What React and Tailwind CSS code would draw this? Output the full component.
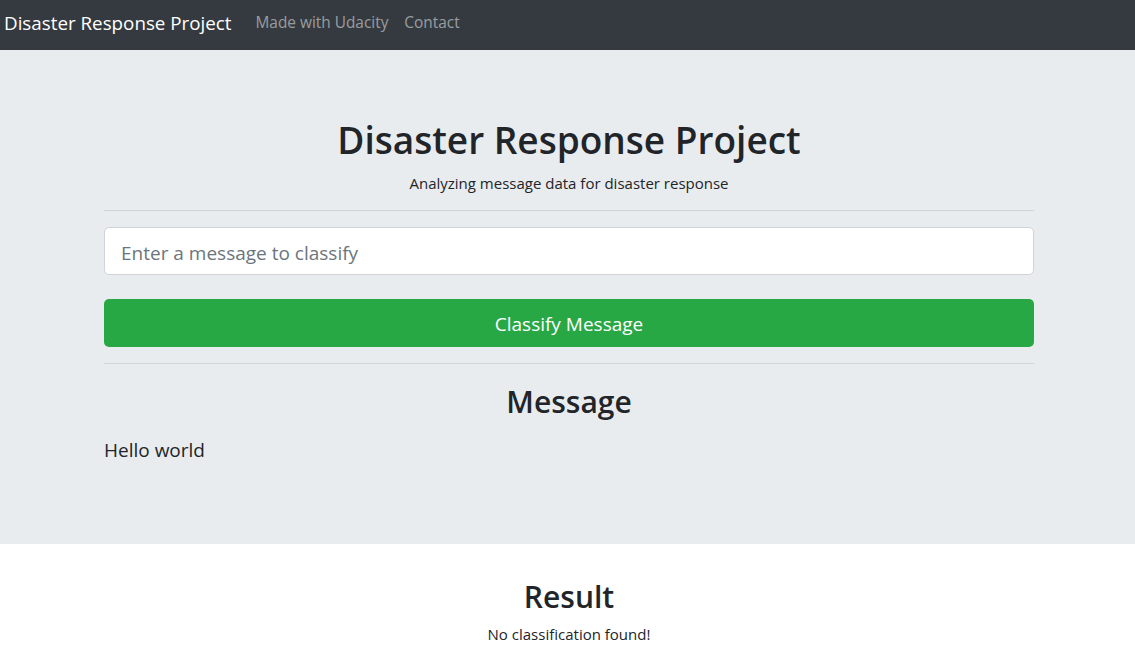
import React from 'react';

const App = () => {
  return (
    <div className="min-h-screen bg-white text-[#212529] font-['Open_Sans',_'Liberation_Sans',_sans-serif]">
      {/* Navbar */}
      <nav className="h-[50px] bg-[#343a40] flex items-center pl-[4px] pb-[4px]">
        <a className="text-[18.8px] text-white leading-[30px] mr-[16px]" href="#">
          Disaster Response Project
        </a>
        <a className="text-[15.4px] text-white/50 px-[8px]" href="#">
          Made with Udacity
        </a>
        <a className="text-[15.4px] text-white/50 px-[8px]" href="#">
          Contact
        </a>
      </nav>

      {/* Jumbotron */}
      <div className="bg-[#e9ecef] pt-[66px] h-[494px]">
        <div className="w-[930px] ml-[104px]">
          <h1 className="text-[37px] leading-[48px] text-center font-semibold">
            Disaster Response Project
          </h1>
          <p className="text-[15px] leading-[24px] text-center mt-[7px]">
            Analyzing message data for disaster response
          </p>
          <hr className="mt-[15px] border-t border-black/10" />
          <input
            type="text"
            placeholder="Enter a message to classify"
            className="mt-[16px] w-full h-[48px] px-[16px] pt-[3px] text-[19px] bg-white border border-[#ced4da] rounded-[5px] placeholder:text-[#6c757d] outline-none"
          />
          <button className="mt-[24px] w-full h-[48px] pt-[2px] bg-[#28a745] text-white text-[19px] rounded-[5px]">
            Classify Message
          </button>
          <hr className="mt-[16px] border-t border-black/10" />
          <h2 className="mt-[19px] text-[30px] leading-[38px] text-center font-semibold">Message</h2>
          <p className="mt-[14px] text-[19px] leading-[30px]">Hello world</p>
        </div>
      </div>

      {/* Result */}
      <div className="w-[930px] ml-[104px] pt-[34px]">
        <h2 className="text-[30px] leading-[38px] text-center font-semibold">Result</h2>
        <p className="mt-[6px] text-[15px] leading-[24px] text-center">No classification found!</p>
      </div>
    </div>
  );
};

export default App;
